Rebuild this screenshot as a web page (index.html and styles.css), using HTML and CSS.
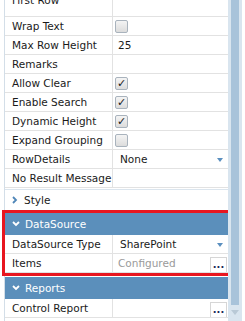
FILE: index.html
```html
<!DOCTYPE html>
<html lang="en">
<head>
    <meta charset="UTF-8">
    <title>Properties</title>
    <link rel="stylesheet" href="styles.css">
</head>
<body>
    <div class="panel">
        <div class="grid">
            <div class="list">
                <div class="row first"><div class="label">First Row</div><div class="value"></div></div>
                <div class="row"><div class="label">Wrap Text</div><div class="value"><span class="check"></span></div></div>
                <div class="row"><div class="label">Max Row Height</div><div class="value">25</div></div>
                <div class="row"><div class="label">Remarks</div><div class="value"></div></div>
                <div class="row"><div class="label">Allow Clear</div><div class="value"><span class="check on">&#10003;</span></div></div>
                <div class="row"><div class="label">Enable Search</div><div class="value"><span class="check on">&#10003;</span></div></div>
                <div class="row"><div class="label">Dynamic Height</div><div class="value"><span class="check on">&#10003;</span></div></div>
                <div class="row"><div class="label">Expand Grouping</div><div class="value"><span class="check"></span></div></div>
                <div class="row"><div class="label">RowDetails</div><div class="value select">None<span class="arrow"></span></div></div>
                <div class="row"><div class="label">No Result Message</div><div class="value"></div></div>
            </div>

            <div class="group collapsed">
                <svg class="chev" width="6" height="8" viewBox="0 0 6 8"><polyline points="1,1 4,4 1,7" fill="none" stroke="#4f86b8" stroke-width="1.8"/></svg>
                Style
            </div>

            <div class="section highlight">
                <div class="group">
                    <svg class="chev" width="8" height="6" viewBox="0 0 8 6"><polyline points="1,1 4,4 7,1" fill="none" stroke="#fff" stroke-width="1.8"/></svg>
                    DataSource
                </div>
                <div class="row"><div class="label">DataSource Type</div><div class="value select">SharePoint<span class="arrow"></span></div></div>
                <div class="row"><div class="label">Items</div><div class="value muted">Configured<span class="dots">...</span></div></div>
            </div>

            <div class="section">
                <div class="group">
                    <svg class="chev" width="8" height="6" viewBox="0 0 8 6"><polyline points="1,1 4,4 7,1" fill="none" stroke="#fff" stroke-width="1.8"/></svg>
                    Reports
                </div>
                <div class="row"><div class="label">Control Report</div><div class="value"><span class="dots">...</span></div></div>
            </div>
        </div>
        <div class="scrollbar">
            <div class="thumb"></div>
            <div class="down"></div>
        </div>
    </div>
</body>
</html>
```

FILE: styles.css
```css
body {
    margin: 0;
    width: 245px;
    height: 321px;
    overflow: hidden;
    background: #fff;
    font-family: "DejaVu Sans", Verdana, sans-serif;
    font-size: 10.5px;
    color: #1a1a1a;
}
.panel {
    display: flex;
    height: 321px;
    padding-left: 4px;
}
.grid {
    width: 223px;
    border-left: 1px solid #d3dee8;
    display: flex;
    flex-direction: column;
}
.row {
    display: grid;
    grid-template-columns: 107px 1fr;
    height: 19px;
    box-sizing: border-box;
    border-bottom: 1px solid #e2e2e2;
}
.row.first {
    height: 26px;
    margin-top: -9px;
}
.label {
    padding-left: 7px;
    line-height: 18px;
    white-space: nowrap;
}
.value {
    position: relative;
    border-left: 1px solid #e2e2e2;
    padding-left: 5px;
    line-height: 18px;
    display: flex;
    align-items: center;
}
.select {
    padding-left: 7px;
}
.muted {
    color: #9a9a9a;
}
.check {
    width: 11px;
    height: 11px;
    margin-left: -3px;
    border: 1px solid #a9b3bd;
    border-radius: 2px;
    background: linear-gradient(#f4f4f4, #dcdcdc);
    font-size: 11px;
    line-height: 11px;
    text-align: center;
    font-weight: bold;
    color: #1a1a1a;
}
.arrow {
    position: absolute;
    right: 5px;
    top: 8px;
    border-left: 3px solid transparent;
    border-right: 3px solid transparent;
    border-top: 4px solid #5a8fbf;
}
.dots {
    position: absolute;
    right: 1px;
    bottom: 0;
    width: 17px;
    height: 15px;
    box-sizing: border-box;
    border: 1px solid #d6d6d6;
    border-bottom: none;
    background: #fff;
    color: #1d2b5a;
    font-weight: bold;
    font-size: 10px;
    line-height: 13px;
    text-align: center;
}
.group {
    display: flex;
    align-items: center;
    gap: 5px;
    height: 22px;
    padding-left: 7px;
    background: #5b8fbb;
    color: #fff;
}
.group.collapsed {
    height: 20px;
    margin-top: 1px;
    border-top: 1px solid #dbe5ee;
    background: #fff;
    color: #1a1a1a;
    gap: 6px;
}
.section {
    margin-top: 3px;
}
.highlight {
    outline: 3px solid #e8161f;
    outline-offset: 0;
    margin-top: 3px;
}
.section + .section {
    margin-top: 4px;
}
.scrollbar {
    width: 14px;
    display: flex;
    flex-direction: column;
    align-items: center;
    background: #d9e5ef;
}
.thumb {
    width: 8px;
    height: 305px;
    background: #a8c3da;
}
.down {
    margin-top: 5px;
    border-left: 4px solid transparent;
    border-right: 4px solid transparent;
    border-top: 5px solid #b9c9d6;
}
```
